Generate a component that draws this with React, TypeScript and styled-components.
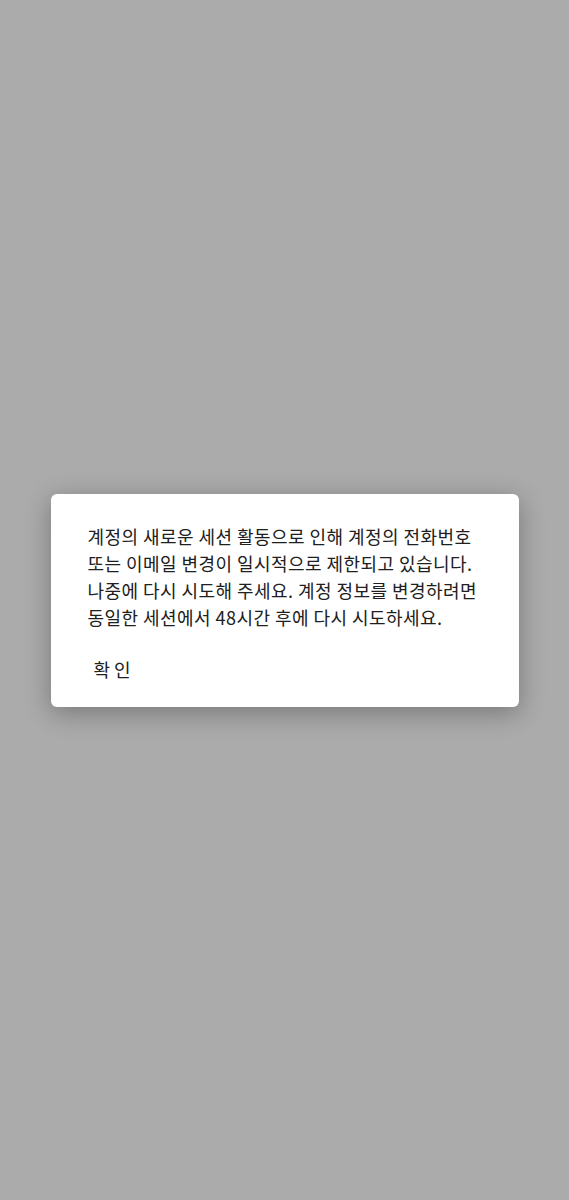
import styled, { createGlobalStyle } from "styled-components";

const GlobalStyle = createGlobalStyle`
  html, body {
    margin: 0;
    padding: 0;
    background: #ababab;
  }
`;

const Screen = styled.div`
  height: 1200px;
  display: flex;
  align-items: center;
  justify-content: center;
  font-family: "Noto Sans CJK KR", "Noto Sans", sans-serif;
`;

const Dialog = styled.div`
  width: 468px;
  background: #ffffff;
  border-radius: 6px;
  box-shadow: 0 6px 26px rgba(0, 0, 0, 0.3);
  padding: 29px 30px 21px 37px;
  box-sizing: border-box;
`;

const Message = styled.p`
  margin: 0;
  font-size: 18px;
  line-height: 27px;
  font-weight: 400;
  color: #202020;
  letter-spacing: 0.45px;
  white-space: nowrap;
`;

const Actions = styled.div`
  display: flex;
  margin-top: 21px;
`;

const Button = styled.button`
  border: none;
  background: none;
  padding: 4px 6px;
  font-family: inherit;
  font-size: 18px;
  font-weight: 400;
  line-height: 26px;
  color: #202020;
  letter-spacing: 4px;
`;

export default function App() {
  return (
    <>
      <GlobalStyle />
      <Screen>
        <Dialog>
          <Message>
            계정의 새로운 세션 활동으로 인해 계정의 전화번호
            <br />
            또는 이메일 변경이 일시적으로 제한되고 있습니다.
            <br />
            나중에 다시 시도해 주세요. 계정 정보를 변경하려면
            <br />
            동일한 세션에서 48시간 후에 다시 시도하세요.
          </Message>
          <Actions>
            <Button>확인</Button>
          </Actions>
        </Dialog>
      </Screen>
    </>
  );
}
